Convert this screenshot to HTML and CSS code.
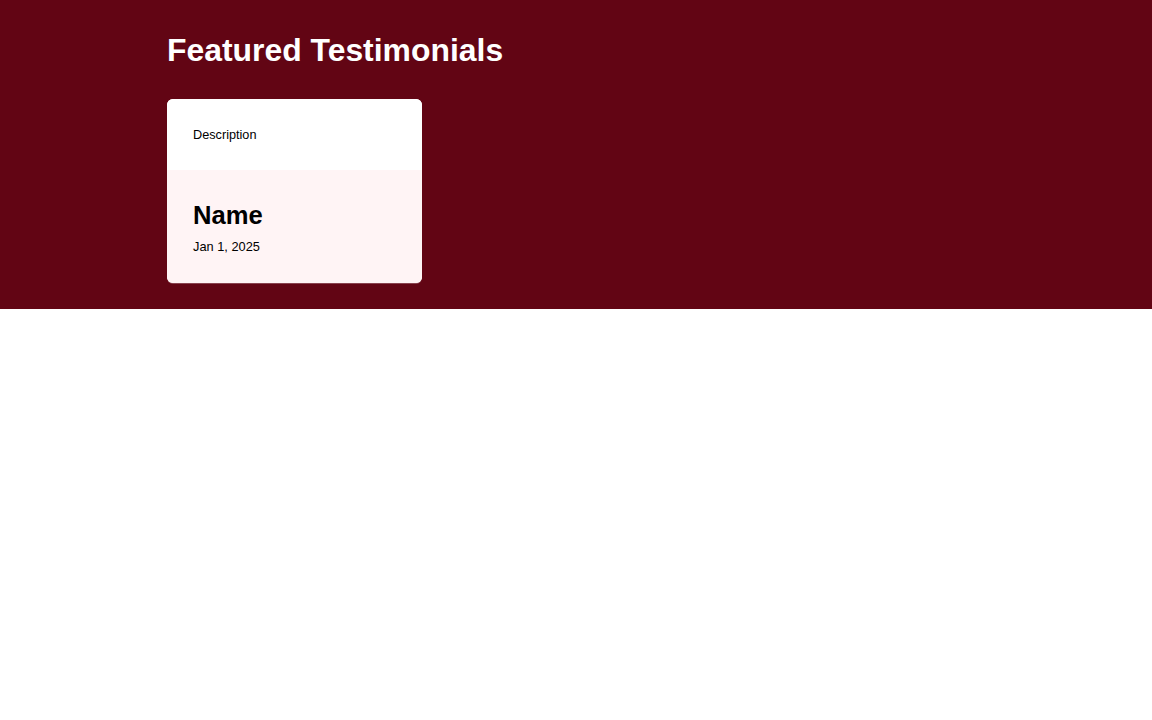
FILE: index.html
```html
<!DOCTYPE html>
<html lang="en">
<head>
<meta charset="utf-8">
<title>Featured Testimonials</title>
<link rel="stylesheet" href="styles.css">
</head>
<body>
<section class="featured">
  <div class="container">
    <h2 class="title">Featured Testimonials</h2>
    <div class="cards">
      <article class="card">
        <div class="card-body">
          <p class="description">Description</p>
        </div>
        <div class="card-footer">
          <h3 class="name">Name</h3>
          <p class="date">Jan 1, 2025</p>
        </div>
      </article>
    </div>
  </div>
</section>
</body>
</html>
```
FILE: styles.css
```css
* { box-sizing: border-box; }
html, body { margin: 0; padding: 0; }
body {
  font-family: "Liberation Sans", Arial, sans-serif;
  background: #ffffff;
  color: #000;
}
.featured {
  background: #620514;
  padding: 32px 0 26px;
}
.container {
  max-width: 818px;
  margin: 0 auto;
}
.title {
  margin: 0 0 30px;
  font-size: 31.9px;
  line-height: 37px;
  font-weight: 700;
  color: #ffffff;
}
.cards {
  display: grid;
  grid-template-columns: 255px;
}
.card {
  border-radius: 6px;
  overflow: hidden;
  background: #ffffff;
  box-shadow: 0 1px 0 rgba(255, 255, 255, 0.25);
}
.card-body {
  padding: 29px 26px 27px;
  background: #ffffff;
}
.description {
  margin: 0;
  font-size: 12.7px;
  line-height: 15px;
}
.card-footer {
  background: #fff4f5;
  padding: 30px 26px 29px;
}
.name {
  margin: 0 0 9px;
  font-size: 25.6px;
  line-height: 30px;
  font-weight: 700;
}
.date {
  margin: 0;
  font-size: 12.8px;
  line-height: 15px;
}
```
